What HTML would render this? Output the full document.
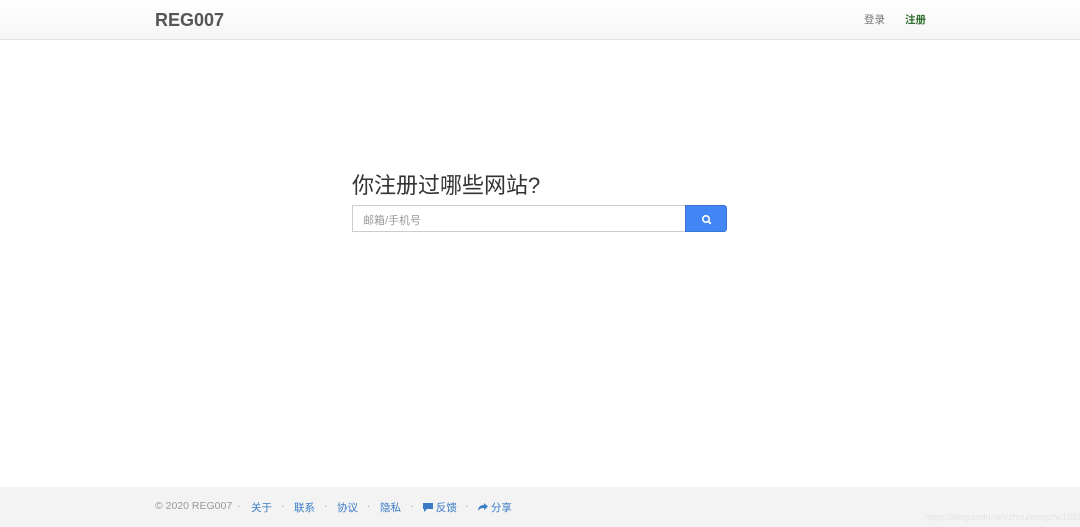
<!DOCTYPE html>
<html><head><meta charset="utf-8"><style>
*{margin:0;padding:0;box-sizing:border-box}
body{width:1080px;height:527px;position:relative;background:#fff;font-family:"Liberation Sans","Noto Sans CJK SC",sans-serif;overflow:hidden}
.nav{position:absolute;left:0;top:0;width:1080px;height:40px;background:linear-gradient(#fff,#f5f5f5);border-bottom:1px solid #e3e3e3}
.logo{position:absolute;left:155px;top:10px;font-size:18px;font-weight:bold;color:#555;letter-spacing:0}
.nl{position:absolute;top:12px;font-size:10.5px}
h1{position:absolute;left:352px;top:171px;font-size:22px;line-height:30px;font-weight:normal;color:#333}
.in{position:absolute;left:352px;top:205px;width:334px;height:27px;border:1px solid #ccc;border-right:none;font-size:11px;color:#999;padding:6px 10px}
.btn{position:absolute;left:685px;top:205px;width:42px;height:27px;background:#4285f4;border:1px solid #3a76d8;border-radius:0 3px 3px 0}
.foot{position:absolute;left:0;top:487px;width:1080px;height:40px;background:#f3f3f3;font-size:10.5px}
.foot span{position:absolute;top:13px}
.b{color:#3a7bc8}.d{color:#999}
</style></head><body>
<div class="nav"><div class="logo">REG007</div>
<span class="nl" style="left:864px;color:#777">登录</span>
<span class="nl" style="left:905px;color:#2e6e2e;font-weight:bold">注册</span></div>
<h1>你注册过哪些网站?</h1>
<div class="in">邮箱/手机号</div>
<div class="btn"><svg width="42" height="27" viewBox="0 0 42 27"><circle cx="20" cy="13" r="3.2" fill="none" stroke="#fff" stroke-width="1.6"/><path d="M22.3 15.3l2.5 2.5" stroke="#fff" stroke-width="1.8"/></svg></div>
<div class="foot">
<span class="d" style="left:155px;font-size:10.5px">© 2020 REG007</span>
<span class="d" style="left:237px">·</span><span class="b" style="left:251px">关于</span>
<span class="d" style="left:281px">·</span><span class="b" style="left:294px">联系</span>
<span class="d" style="left:324px">·</span><span class="b" style="left:337px">协议</span>
<span class="d" style="left:367px">·</span><span class="b" style="left:380px">隐私</span>
<span class="d" style="left:410px">·</span><span class="b" style="left:423px"><svg width="10" height="9" viewBox="0 0 10 9" style="vertical-align:-1px"><path d="M0 0h10v6H4L1 9V6H0z" fill="#3a7bc8"/></svg> 反馈</span>
<span class="d" style="left:465px">·</span><span class="b" style="left:478px"><svg width="10" height="9" viewBox="0 0 10 9" style="vertical-align:-1px"><path d="M10 3.5L6 0v2C2 2 0 4.5 0 8c1.5-2.5 3.5-3 6-3v2z" fill="#3a7bc8"/></svg> 分享</span>
<span style="left:925px;color:#e4e4e4;font-size:9px;top:25px">https://blog.csdn.net/zhouhengzhe1091</span>
</div>
</body></html>
